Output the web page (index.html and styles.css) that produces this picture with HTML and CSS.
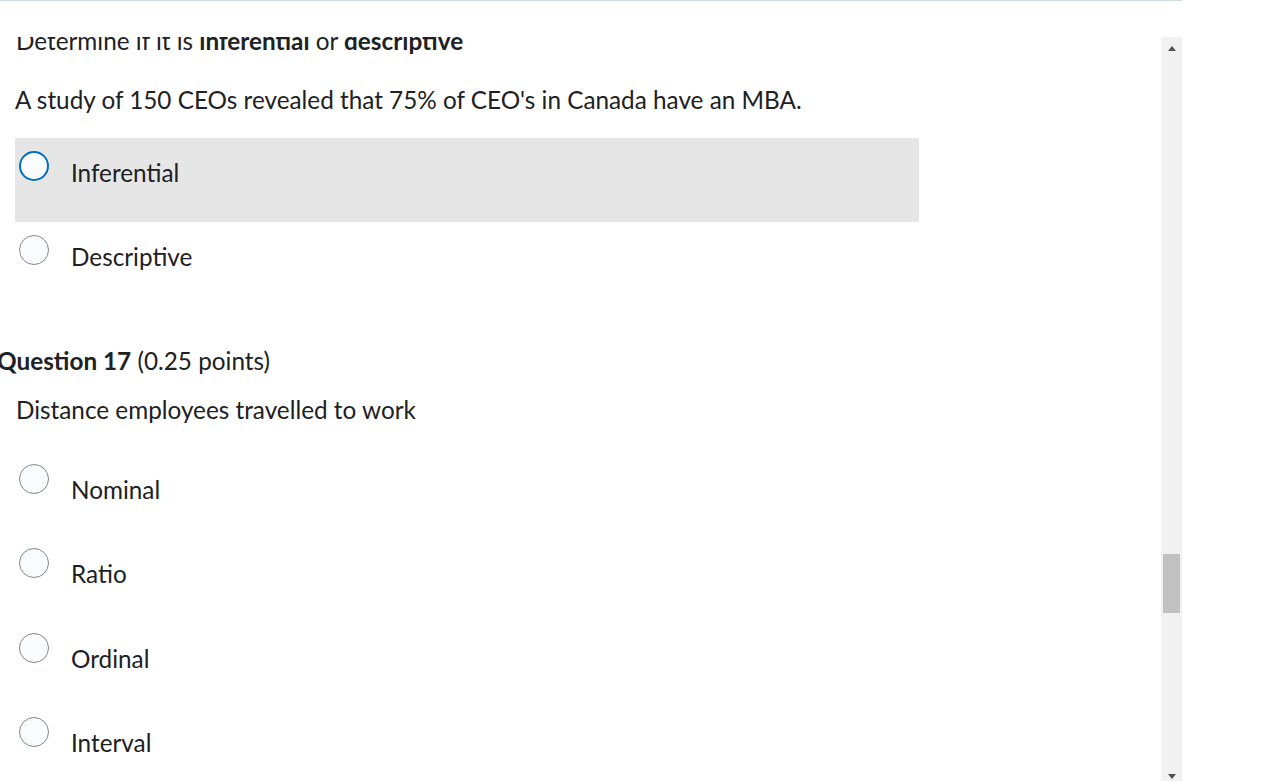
FILE: index.html
```html
<!DOCTYPE html>
<html lang="en">
<head>
<meta charset="utf-8">
<title>Quiz</title>
<link rel="stylesheet" href="styles.css">
</head>
<body>
<div class="topline"></div>
<div class="frame">
  <div class="content">
    <p class="instruction">Determine if it is <b>inferential</b> or <b>descriptive</b></p>
    <p class="stem">A study of 150 CEOs revealed that 75% of CEO's in Canada have an MBA.</p>
    <div class="options">
      <label class="option focused"><span class="radio"></span><span class="label">Inferential</span></label>
      <label class="option"><span class="radio"></span><span class="label">Descriptive</span></label>
    </div>
    <h2 class="qhead"><b>Question 17</b> (0.25 points)</h2>
    <p class="stem2">Distance employees travelled to work</p>
    <div class="options options2">
      <label class="option"><span class="radio"></span><span class="label">Nominal</span></label>
      <label class="option"><span class="radio"></span><span class="label">Ratio</span></label>
      <label class="option"><span class="radio"></span><span class="label">Ordinal</span></label>
      <label class="option"><span class="radio"></span><span class="label">Interval</span></label>
    </div>
  </div>
  <div class="scrollbar">
    <div class="arrow up"></div>
    <div class="track"><div class="thumb"></div></div>
    <div class="arrow down"></div>
  </div>
</div>
</body>
</html>
```
FILE: styles.css
```css
html, body {
  margin: 0;
  padding: 0;
  background: #ffffff;
  overflow: hidden;
}
body {
  font-family: Lato, "Noto Sans", sans-serif;
  font-size: 24.3px;
  line-height: 28.8px;
  color: #202122;
  width: 1282px;
  height: 781px;
}
.topline {
  width: 1182px;
  height: 1px;
  background: #d3d9e3;
  margin-bottom: 36px;
}
.frame {
  display: flex;
  width: 1182px;
  height: 744px;
}
.content {
  width: 1161px;
  height: 744px;
  overflow: hidden;
  padding-left: 15px;
  box-sizing: border-box;
}
.instruction {
  margin: -10px 0 0 1px;
}
.instruction b { font-weight: 700; }
.stem {
  margin: 30px 0 0 0;
}
.options {
  margin-top: 23.4px;
  width: 904px;
  display: flex;
  flex-direction: column;
}
.option {
  display: flex;
  align-items: flex-start;
  height: 84px;
  box-sizing: border-box;
  padding: 13px 0 0 4px;
}
.option.focused {
  background: #e6e6e6;
}
.radio {
  width: 30px;
  height: 30px;
  border-radius: 50%;
  border: 1px solid #868686;
  background: #f9fbff;
  box-sizing: border-box;
  flex: none;
}
.focused .radio {
  border: 2px solid #006fbf;
}
.label {
  margin: 8px 0 0 22px;
}
.options2 .label {
  margin-top: 12.3px;
}
.options2 .option {
  height: 84.5px;
}
.qhead {
  margin: 41.5px 0 0 -18px;
  font-size: 24.3px;
  line-height: 28.8px;
  font-weight: 400;
}
.qhead b { font-weight: 700; }
.stem2 {
  margin: 20px 0 0 1px;
}
.options2 {
  margin-top: 25.5px;
}
.scrollbar {
  width: 21px;
  height: 744px;
  background: #f1f1f1;
  display: flex;
  flex-direction: column;
  align-items: center;
}
.arrow {
  width: 0;
  height: 0;
  border-left: 4.5px solid transparent;
  border-right: 4.5px solid transparent;
  flex: none;
}
.arrow.up {
  border-bottom: 5px solid #505050;
  margin-top: 9px;
}
.arrow.down {
  border-top: 5px solid #505050;
  margin-bottom: 2px;
}
.track {
  flex: 1;
  width: 17px;
  position: relative;
}
.thumb {
  position: absolute;
  left: 0;
  top: 503px;
  width: 17px;
  height: 59px;
  background: #c1c1c1;
}
```
